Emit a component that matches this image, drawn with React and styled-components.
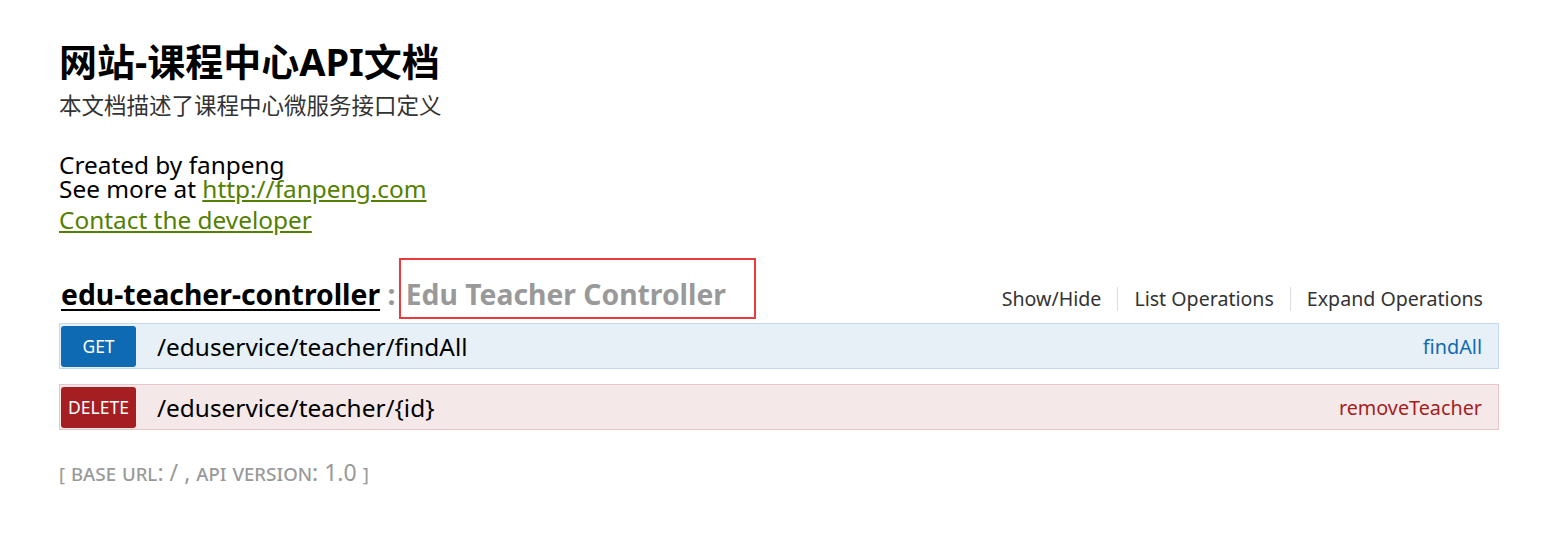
import React from 'react';
import styled, { createGlobalStyle } from 'styled-components';

const GlobalStyle = createGlobalStyle`
  body {
    margin: 0;
    background: #fff;
    font-family: "Noto Sans", "Noto Sans CJK SC", sans-serif;
  }
`

const Wrap = styled.div`
  width: 1440px;
  padding: 34px 0 40px 59px;
  color: #000;
`

const InfoTitle = styled.h1`
  margin: 0;
  font-size: 38px;
  font-weight: bold;
  line-height: 54px;
`

const InfoDesc = styled.div`
  font-size: 22.5px;
  color: #333;
  line-height: 30px;
  margin-top: 3px;
`

const Contact = styled.div`
  margin-top: 32px;
  font-size: 24.4px;
  line-height: 24px;
`

const Link = styled.a`
  color: #547f00;
  text-decoration: underline;
`

const ContactLink = styled.div`
  margin-top: 7px;
  font-size: 24.4px;
  line-height: 24px;
`

const Resource = styled.div`
  margin-top: 45px;
`

const Heading = styled.div`
  display: flex;
  align-items: flex-end;
  justify-content: space-between;
  padding: 0 16px 12px 2px;
`

const HeadingTitle = styled.h2`
  margin: 0;
  font-size: 28.3px;
  font-weight: bold;
  line-height: 34px;
  color: #999;
`

const ResName = styled.a`
  color: #000;
  text-decoration: underline;
  text-underline-offset: 4px;
  text-decoration-thickness: 2px;
`

const Marked = styled.span`
  position: relative;
  margin-left: 3px;
  &::after {
    content: '';
    position: absolute;
    left: -7px;
    right: -30px;
    top: -17px;
    bottom: -6px;
    border: 2px solid #ec3b3c;
  }
`

const Options = styled.ul`
  display: flex;
  list-style: none;
  margin: 0;
  padding: 0;
`

const Option = styled.li`
  font-size: 19.6px;
  line-height: 24px;
  color: #333;
  padding: 0 16px;
  border-left: 1px solid #ddd;
  &:first-child {
    border-left: none;
  }
  &:last-child {
    padding-right: 0;
  }
`

const Operation = styled.div`
  display: flex;
  align-items: center;
  height: 42px;
  padding: 1px 16px 1px 1px;
  margin-bottom: 15px;
  background: ${p => p.method === 'get' ? '#e7f0f7' : '#f5e8e8'};
  border: 1px solid ${p => p.method === 'get' ? '#c3d9ec' : '#e8c6c7'};
`

const Method = styled.span`
  width: 75px;
  height: 41px;
  display: flex;
  align-items: center;
  justify-content: center;
  border-radius: 3px;
  color: #fff;
  font-size: 17.5px;
  background: ${p => p.method === 'get' ? '#0f6ab4' : '#a41e22'};
`

const Path = styled.span`
  flex: 1;
  margin-left: 21px;
  font-size: 24.4px;
  color: #000;
`

const Nick = styled.span`
  font-size: 19.8px;
  color: ${p => p.method === 'get' ? '#0f6ab4' : '#a41e22'};
`

const Footer = styled.h4`
  margin: 26px 0 0 0;
  color: #999;
  font-weight: normal;
  font-size: 23px;
  font-variant: small-caps;
`

const ops = [
  { method: 'get', label: 'GET', path: '/eduservice/teacher/findAll', nick: 'findAll' },
  { method: 'delete', label: 'DELETE', path: '/eduservice/teacher/{id}', nick: 'removeTeacher' },
]

const App = () => {
  return (
    <>
      <GlobalStyle />
      <Wrap>
        <InfoTitle>网站-课程中心API文档</InfoTitle>
        <InfoDesc>本文档描述了课程中心微服务接口定义</InfoDesc>
        <Contact>
          Created by fanpeng<br />
          See more at <Link href="#">http://fanpeng.com</Link>
        </Contact>
        <ContactLink><Link href="#">Contact the developer</Link></ContactLink>
        <Resource>
          <Heading>
            <HeadingTitle>
              <ResName href="#">edu-teacher-controller</ResName> : <Marked>Edu Teacher Controller</Marked>
            </HeadingTitle>
            <Options>
              <Option>Show/Hide</Option>
              <Option>List Operations</Option>
              <Option>Expand Operations</Option>
            </Options>
          </Heading>
          {ops.map(op => (
            <Operation key={op.nick} method={op.method}>
              <Method method={op.method}>{op.label}</Method>
              <Path>{op.path}</Path>
              <Nick method={op.method}>{op.nick}</Nick>
            </Operation>
          ))}
        </Resource>
        <Footer>[ base url: / , api version: 1.0 ]</Footer>
      </Wrap>
    </>
  )
}

export default App;
